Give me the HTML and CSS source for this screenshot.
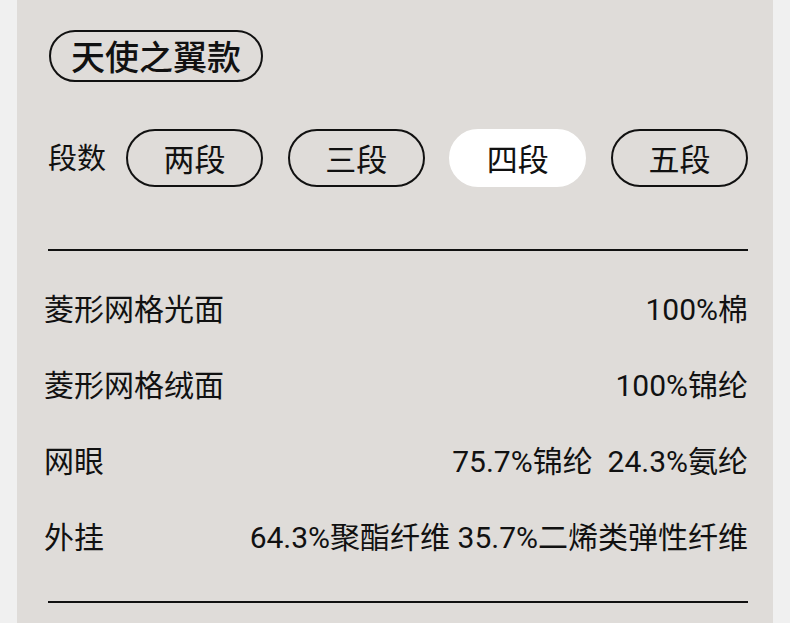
FILE: index.html
```html
<!DOCTYPE html>
<html lang="zh-CN">
<head>
<meta charset="utf-8">
<title>天使之翼款</title>
<link rel="stylesheet" href="styles.css">
</head>
<body>
<main class="panel">
  <div class="title-row">
    <span class="title-pill">天使之翼款</span>
  </div>
  <div class="seg-row">
    <span class="seg-label">段数</span>
    <div class="seg-options">
      <span class="seg-pill">两段</span>
      <span class="seg-pill">三段</span>
      <span class="seg-pill seg-pill--active">四段</span>
      <span class="seg-pill">五段</span>
    </div>
  </div>
  <hr class="divider divider--top">
  <ul class="spec-list">
    <li class="spec-row"><span class="spec-name">菱形网格光面</span><span class="spec-value">100%棉</span></li>
    <li class="spec-row"><span class="spec-name">菱形网格绒面</span><span class="spec-value">100%锦纶</span></li>
    <li class="spec-row"><span class="spec-name">网眼</span><span class="spec-value">75.7%锦纶  24.3%氨纶</span></li>
    <li class="spec-row"><span class="spec-name">外挂</span><span class="spec-value">64.3%聚酯纤维 35.7%二烯类弹性纤维</span></li>
  </ul>
  <hr class="divider divider--bottom">
</main>
</body>
</html>
```
FILE: styles.css
```css
* {
  box-sizing: border-box;
}

html, body {
  margin: 0;
  padding: 0;
  background: #f0f0f0;
}

body {
  font-family: "Noto Sans CJK SC", "Noto Sans", sans-serif;
  color: #111;
}

.panel {
  margin-left: 17px;
  width: 756px;
  min-height: 623px;
  background: #dfdcd9;
  padding: 30px 25px 0 31px;
}

.title-row {
  display: flex;
  padding-left: 1px;
}

.title-pill {
  display: inline-flex;
  align-items: center;
  justify-content: center;
  height: 52px;
  padding: 0 20px;
  border: 2px solid #111;
  border-radius: 26px;
  font-size: 34px;
  font-weight: 500;
  line-height: 1;
}

.seg-row {
  display: flex;
  align-items: center;
  margin-top: 47px;
  height: 58px;
}

.seg-label {
  width: 78px;
  font-size: 29px;
  line-height: 1;
  padding-bottom: 3px;
}

.seg-options {
  flex: 1;
  display: flex;
  justify-content: space-between;
}

.seg-pill {
  display: flex;
  align-items: center;
  justify-content: center;
  width: 137px;
  height: 58px;
  border: 2px solid #111;
  border-radius: 29px;
  font-size: 31px;
  line-height: 1;
  padding-bottom: 2px;
}

.seg-pill--active {
  background: #fff;
  border-color: #fff;
}

.divider {
  margin: 0;
  border: 0;
  height: 2px;
  width: 700px;
  background: #111;
}

.divider--top {
  margin-top: 62px;
}

.divider--bottom {
  margin-top: 25px;
}

.spec-list {
  list-style: none;
  margin: 21px 0 0 -4px;
  padding: 0;
  width: 704px;
}

.spec-row {
  display: flex;
  justify-content: space-between;
  align-items: center;
  height: 76px;
  font-family: Roboto, "Noto Sans CJK SC", sans-serif;
  font-size: 30px;
  line-height: 1;
}

.spec-value {
  white-space: pre;
}
```
